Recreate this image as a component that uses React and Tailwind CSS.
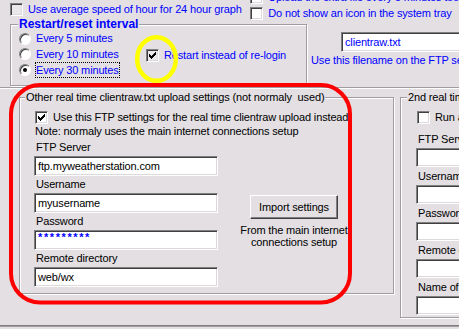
import React from "react";

const FACE = "bg-[#e3dfe3]";
const ETCH = "border border-[#a09ca0] shadow-[inset_1px_1px_0_#fff,1px_1px_0_#fff]";
const SUNKEN =
  "border border-t-[#808080] border-l-[#808080] border-r-white border-b-white shadow-[inset_1px_1px_0_#404040,inset_-1px_-1px_0_#dcd8dc]";

function CheckBox({ checked = false, gray = false }) {
  return (
    <span
      className={`flex items-center justify-center w-[13px] h-[13px] shrink-0 ${SUNKEN} ${
        gray ? "bg-[#ebe8eb]" : "bg-white"
      }`}
    >
      {checked && (
        <svg width="7" height="7" viewBox="0 0 7 7" shapeRendering="crispEdges">
          <path d="M0 2h1v1h1v1h1v-1h1v-1h1v-1h1v-1h1v3h-1v1h-1v1h-1v1h-1v1h-1v-1h-1v-1h-1z" fill="#000" />
        </svg>
      )}
    </span>
  );
}

function Radio({ checked = false }) {
  return (
    <span className="flex items-center justify-center w-[12px] h-[12px] shrink-0 rounded-full bg-white border border-t-[#808080] border-l-[#808080] border-r-white border-b-white shadow-[inset_1px_1px_0_#404040]">
      {checked && <span className="w-[4px] h-[4px] rounded-full bg-black" />}
    </span>
  );
}

function Group({ title, titleClass = "", titleLeft = "left-[5px]", className = "", children }) {
  return (
    <div className={`relative shrink-0 ${ETCH} ${className}`}>
      <span
        className={`absolute -top-[7px] ${titleLeft} px-[1px] ${FACE} leading-[13px] whitespace-pre ${titleClass}`}
      >
        {title}
      </span>
      {children}
    </div>
  );
}

function Field({ label, value, valueClass = "", labelH = "h-[17px]", inputH = "h-[20px]", width = "w-[184px]" }) {
  return (
    <>
      <div className={`${labelH} flex items-center pl-[2px] whitespace-nowrap`}>{label}</div>
      <div className={`${inputH} ${width} ${SUNKEN} bg-white flex items-center pl-[3px] whitespace-nowrap overflow-hidden`}>
        <span className={valueClass}>{value}</span>
      </div>
    </>
  );
}

export default function App() {
  return (
    <div
      className={`relative w-[459px] h-[329px] overflow-hidden ${FACE} font-['Liberation_Sans',Arial,sans-serif] text-[11px] tracking-[-0.15px] text-black`}
    >
      {/* top checkbox rows */}
      <div className="h-[24px] flex">
        <div className="w-[266px] pl-[10px] pt-[3px]">
          <div className="h-[13px] flex items-center whitespace-nowrap">
            <CheckBox gray />
            <span className="ml-[5px] text-[#0000ff]">Use average speed of hour for 24 hour graph</span>
          </div>
        </div>
        <div className="-mt-[11px] flex flex-col">
          <div className="h-[16px] flex items-center whitespace-nowrap">
            <CheckBox />
            <span className="ml-[5px] text-[#0000ff]">Upload the extra file every 5 minutes too</span>
          </div>
          <div className="h-[16px] flex items-center whitespace-nowrap">
            <CheckBox />
            <span className="ml-[5px] text-[#0000ff]">Do not show an icon in the system tray</span>
          </div>
        </div>
      </div>

      {/* restart group + filename */}
      <div className="h-[63px] flex">
        <Group
          className="ml-[10px] w-[297px] h-[62px] flex"
          title="Restart/reset interval"
          titleLeft="left-[7px]"
          titleClass="font-bold text-[12px] tracking-normal text-[#0000ff]"
        >
          <div className="w-[135px] pl-[8px] pt-[6px] flex flex-col text-[#0000ff] whitespace-nowrap">
            <div className="h-[15px] flex items-center">
              <Radio />
              <span className="ml-[5px]">Every 5 minutes</span>
            </div>
            <div className="h-[16px] flex items-center">
              <Radio />
              <span className="ml-[5px]">Every 10 minutes</span>
            </div>
            <div className="h-[16px] flex items-center">
              <Radio checked />
              <span className="ml-[4px] border border-dotted border-black leading-[14px]">Every 30 minutes</span>
            </div>
          </div>
          <div className="pt-[24px]">
            <div className="h-[13px] flex items-center whitespace-nowrap">
              <CheckBox checked gray />
              <span className="ml-[5px] text-[#0000ff]">Restart instead of re-login</span>
            </div>
          </div>
        </Group>
        <div className="flex-1 pt-[8px] flex flex-col">
          <div className={`ml-[34px] h-[20px] w-[140px] ${SUNKEN} bg-white flex items-center pl-[3px] text-[#0000ff]`}>
            clientraw.txt
          </div>
          <div className="h-[16px] ml-[4px] flex items-center whitespace-nowrap text-[#0000ff]">
            Use this filename on the FTP server
          </div>
        </div>
      </div>
      <div className="h-[2px] border-t border-[#a09ca0] bg-white" />

      {/* realtime upload groups */}
      <div className="h-[236px] flex">
        <Group
          className="ml-[19px] mt-[8px] w-[375px] h-[197px]"
          title="Other real time clientraw.txt upload settings (not normaly  used)"
        >
          <div className="pl-[14px] pt-[13px] flex flex-col">
            <div className="ml-[1px] h-[13px] flex items-center whitespace-nowrap">
              <CheckBox checked />
              <span className="ml-[5px]">Use this FTP settings for the real time clientraw upload instead</span>
            </div>
            <div className="ml-[1px] h-[15px] flex items-center whitespace-nowrap">
              Note: normaly uses the main internet connections setup
            </div>
            <div className="flex">
              <div className="flex flex-col">
                <Field label="FTP Server" value="ftp.myweatherstation.com" />
                <Field label="Username" value="myusername" />
                <Field
                  label="Password"
                  value="*********"
                  valueClass="text-[#0000ff] font-bold tracking-[1.6px] leading-none -mt-[5px]"
                />
                <Field label="Remote directory" value="web/wx" />
              </div>
              <div className="ml-[32px] pt-[56px] w-[88px] flex flex-col items-center">
                <div className="w-[88px] h-[24px] flex items-center justify-center border border-t-white border-l-white border-r-[#404040] border-b-[#404040] shadow-[inset_-1px_-1px_0_#808080]">
                  Import settings
                </div>
                <div className="mt-[5px] leading-[12px] text-center whitespace-nowrap">
                  From the main internet
                  <br />
                  connections setup
                </div>
              </div>
            </div>
          </div>
        </Group>
        <Group
          className="ml-[6px] mt-[8px] w-[120px] h-[221px]"
          title="2nd real time clientraw.txt upload"
          titleLeft="left-[6px]"
        >
          <div className="pl-[15px] pt-[13px] flex flex-col">
            <div className="ml-[1px] h-[13px] flex items-center whitespace-nowrap">
              <CheckBox />
              <span className="ml-[5px]">Run a second upload</span>
            </div>
            <div className="mt-[6px] flex flex-col">
              <Field label="FTP Server" value="" labelH="h-[18px]" inputH="h-[19px]" width="w-[110px]" />
              <Field label="Username" value="" labelH="h-[18px]" inputH="h-[19px]" width="w-[110px]" />
              <Field label="Password" value="" labelH="h-[18px]" inputH="h-[19px]" width="w-[110px]" />
              <Field label="Remote directory" value="" labelH="h-[18px]" inputH="h-[19px]" width="w-[110px]" />
              <Field label="Name of file" value="" labelH="h-[18px]" inputH="h-[19px]" width="w-[110px]" />
            </div>
          </div>
        </Group>
      </div>
      <div className="h-[2px] border-t border-[#808080] bg-[#a09ca0]" />

      {/* annotations */}
      <svg className="absolute left-0 top-0 pointer-events-none" width="459" height="329">
        <rect x="11" y="85" width="339" height="217.5" rx="29" fill="none" stroke="#ff0000" strokeWidth="4" />
        <ellipse cx="156.5" cy="59" rx="19.3" ry="21.8" fill="none" stroke="#ffff00" strokeWidth="4.5" />
      </svg>
    </div>
  );
}
